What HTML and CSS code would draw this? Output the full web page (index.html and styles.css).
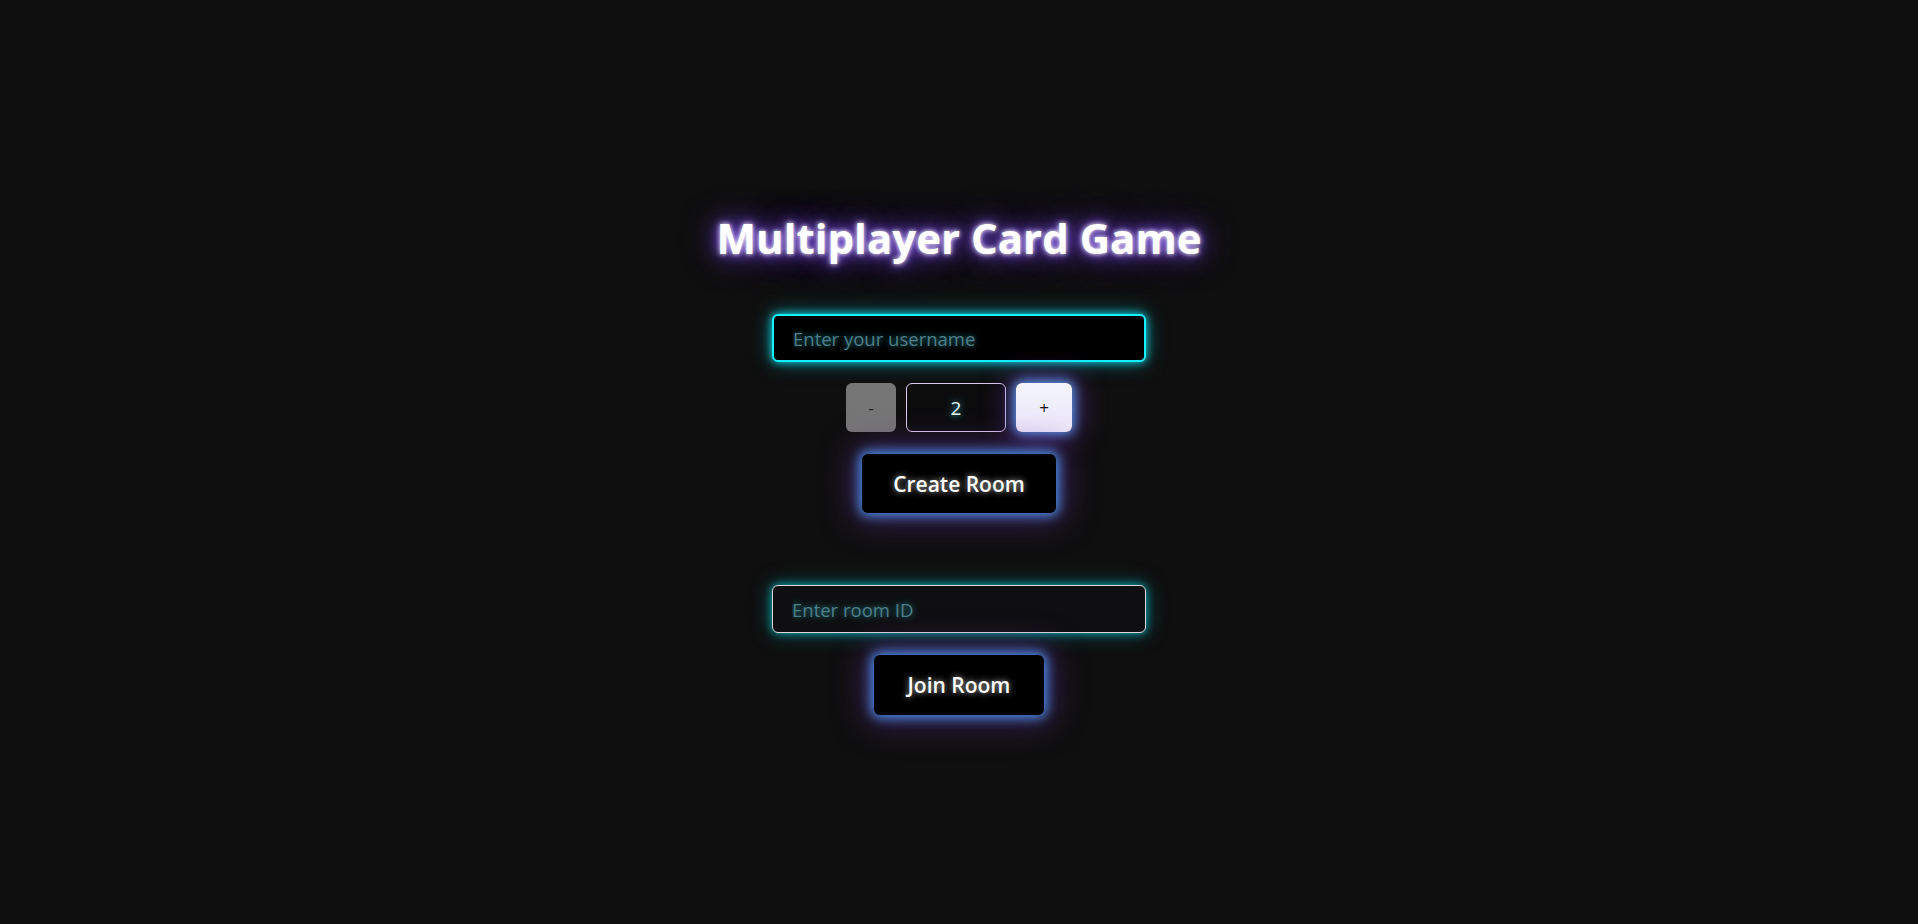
FILE: index.html
```html
<!DOCTYPE html>
<html lang="en">
<head>
<meta charset="utf-8">
<title>Multiplayer Card Game</title>
<link rel="stylesheet" href="styles.css">
</head>
<body>
<main class="lobby">
  <h1 class="title">Multiplayer Card Game</h1>
  <section class="create">
    <input class="field field-active" type="text" placeholder="Enter your username">
    <div class="counter">
      <button class="step step-minus">-</button>
      <div class="count">2</div>
      <button class="step step-plus">+</button>
    </div>
    <button class="action action-create">Create Room</button>
  </section>
  <section class="join">
    <input class="field field-idle" type="text" placeholder="Enter room ID">
    <button class="action action-join">Join Room</button>
  </section>
</main>
</body>
</html>
```

FILE: styles.css
```css
html, body {
  margin: 0;
  padding: 0;
  height: 100%;
}
body {
  background: #0f0f0f;
  font-family: "Open Sans", "Noto Sans", sans-serif;
  color: #fff;
}
.lobby {
  display: flex;
  flex-direction: column;
  align-items: center;
  padding-top: 210px;
}
.title {
  margin: 0;
  font-size: 42px;
  font-weight: 700;
  line-height: 56px;
  color: #fff;
  text-shadow: 0 0 5px #fff, 0 0 12px #8a5cff, 0 0 24px #6a3fd0, 0 0 36px #4a2a90;
}
.create, .join {
  display: flex;
  flex-direction: column;
  align-items: center;
  gap: 21px;
}
.create { margin-top: 48px; }
.join { margin-top: 72px; }
.field {
  box-sizing: border-box;
  width: 374px;
  height: 48px;
  border-radius: 6px;
  padding: 0 19px;
  font-family: inherit;
  font-size: 18.5px;
  color: #fff;
  outline: none;
}
.field::placeholder {
  color: #4f7f88;
  text-shadow: 0 0 6px #1c8a95;
}
.field-active {
  background: #000;
  border: 2px solid #14f0ff;
  box-shadow: 0 0 8px #0fd8e8, 0 0 20px rgba(0, 200, 220, 0.55);
}
.field-idle {
  background: #0f0f11;
  border: 1px solid #d9d9e0;
  box-shadow: 0 0 8px #0aa7b0, 0 0 20px rgba(0, 170, 180, 0.5);
}
.counter {
  display: flex;
  gap: 10px;
  height: 49px;
}
.step {
  border: none;
  border-radius: 6px;
  font-family: inherit;
  font-size: 17px;
  padding: 0;
  color: #111;
}
.step-minus {
  width: 50px;
  background: #767676;
  color: #222;
}
.step-plus {
  width: 56px;
  background: linear-gradient(#f2f4fa, #ece6fa);
  box-shadow: 0 0 12px 2px #5a9cf0, 0 0 28px 6px rgba(120, 60, 200, 0.55);
}
.count {
  box-sizing: border-box;
  width: 100px;
  display: flex;
  align-items: center;
  justify-content: center;
  border: 1px solid #ddc9ec;
  border-radius: 6px;
  background: #0c0c0d;
  font-size: 19px;
  color: #e6ffff;
  text-shadow: 0 0 6px #28c8d8;
}
.action {
  height: 59px;
  border: none;
  border-radius: 6px;
  background: #000;
  color: #fff;
  font-family: inherit;
  font-size: 21px;
  font-weight: 600;
  text-shadow: 0 0 6px rgba(255, 255, 255, 0.7);
  box-shadow: 0 0 12px 3px #4a8ee6, 0 0 32px 8px rgba(100, 45, 160, 0.55);
}
.action-create { width: 194px; margin-top: 1px; }
.action-join { width: 170px; height: 60px; margin-top: 1px; }
```
